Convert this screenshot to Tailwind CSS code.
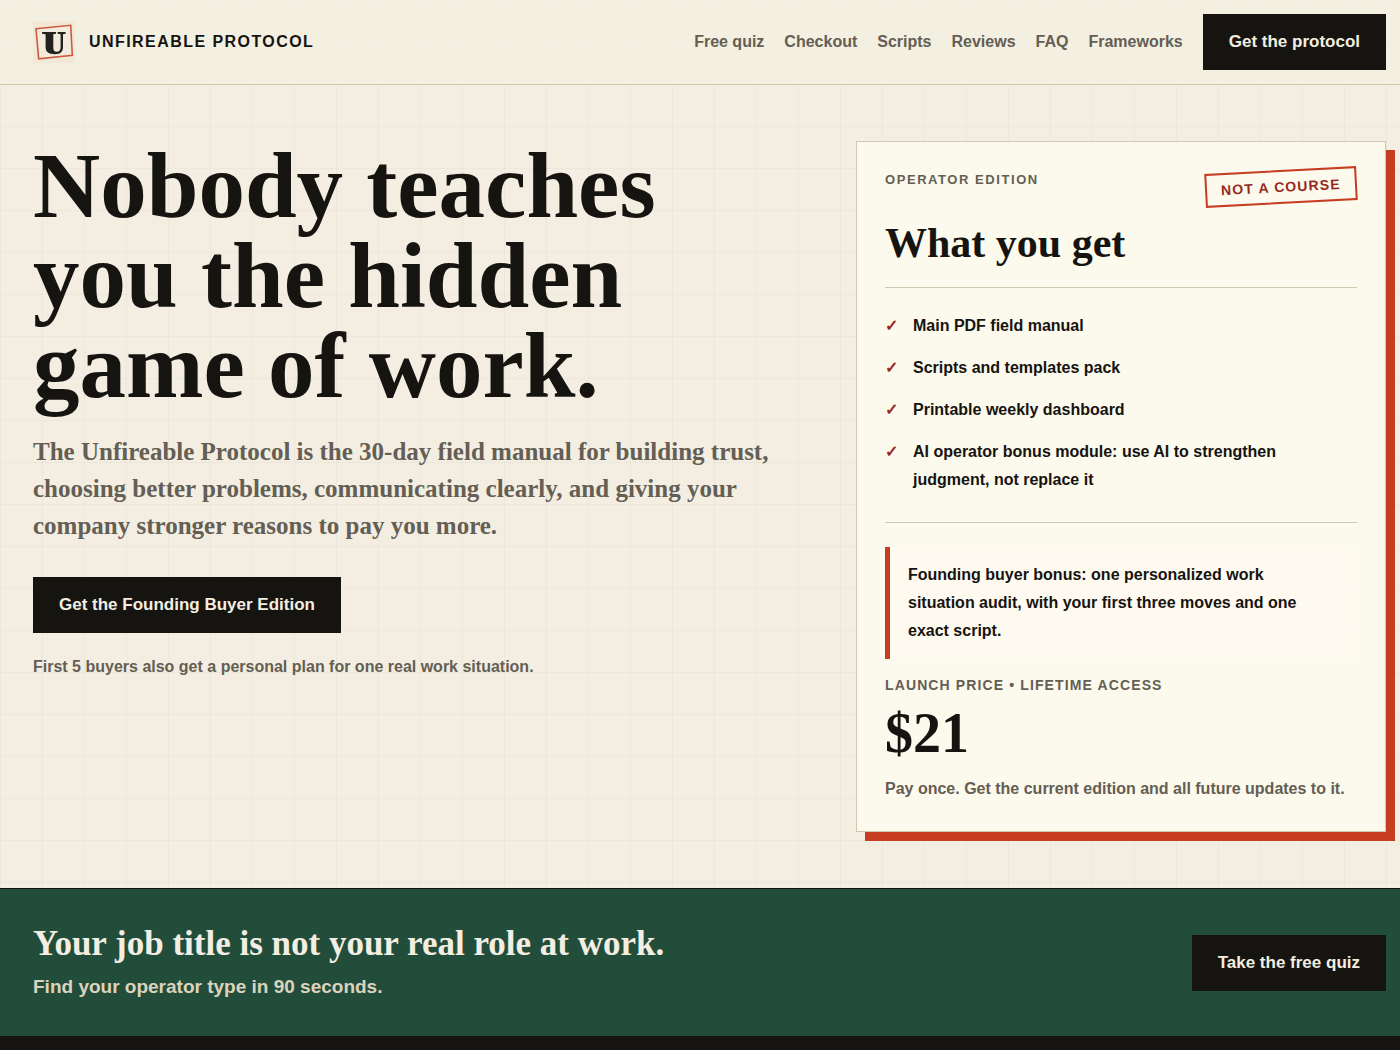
<!DOCTYPE html>
<html lang="en">

<head>
     <meta charset="UTF-8">
     <meta name="viewport" content="width=device-width, initial-scale=1.0">
     <meta name="description" content="The 30-day field manual for building trust at work">
     <title>Unfireable Protocol</title>
     <script src="https://cdn.jsdelivr.net/npm/@tailwindcss/browser@4"></script>
</head>

<body class="min-h-screen bg-[#161410] font-['Liberation_Sans',Arial,sans-serif] text-base leading-7 font-bold text-[#161410]">

     <!-- ruled paper background -->
     <div class="bg-[#f3eee1] bg-[linear-gradient(#16141008_1px,transparent_1px),linear-gradient(90deg,#16141008_1px,transparent_1px)] bg-[size:42px_42px]">

          <header class="border-b border-[#d1c4a8] bg-[#f3eee1]/90">
               <div class="flex items-center justify-between py-3.5 pr-3.5 pl-[33px]">
                    <a href="#" class="flex items-center gap-3.5 tracking-[0.09em] uppercase">
                         <svg class="size-[42px]" viewBox="0 0 42 42" aria-hidden="true">
                              <rect width="42" height="42" fill="#f2e8d5" />
                              <path d="M3 7.7 37.7 4.3 39.3 34.3 5.7 37.9Z" fill="#f3ecdc" stroke="#cc5a43" stroke-width="1.6" />
                              <path d="M9 11H23V12.8L20.3 13.3V26.5C20.3 29.6 21.4 30.8 23.6 30.8C26.4 30.8 27.6 29 27.6 25.8V13.3L24.6 12.8V11H32.6V12.8L30 13.3V25.8C30 30.9 27.6 33.2 22 33.2C15.8 33.2 12.6 30.8 12.6 26V13.3L9 12.8Z" fill="#23221c" />
                         </svg>
                         <span>Unfireable Protocol</span>
                    </a>
                    <nav class="flex items-center gap-5 text-[#645e54]">
                         <a href="#quiz">Free quiz</a>
                         <a href="#checkout">Checkout</a>
                         <a href="#scripts">Scripts</a>
                         <a href="#reviews">Reviews</a>
                         <a href="#faq">FAQ</a>
                         <a href="#frameworks">Frameworks</a>
                         <a href="#checkout" class="bg-[#161410] px-[26px] py-3.5 text-[17px] text-[#f3eee1]">Get the protocol</a>
                    </nav>
               </div>
          </header>

          <main class="grid grid-cols-[1fr_530px] items-start gap-14 pt-14 pr-3.5 pb-14 pl-[33px]">
               <section>
                    <h1 class="max-w-[700px] font-['Liberation_Serif',serif] text-[93px] leading-[90px]">Nobody teaches you the hidden game of work.</h1>
                    <p class="mt-[22px] font-['Liberation_Serif',serif] text-[25px] leading-[37px] text-[#645e54]">The Unfireable Protocol is the 30-day field manual for building trust, choosing better problems, communicating clearly, and giving your company stronger reasons to pay you more.</p>
                    <a href="#checkout" class="mt-[33px] inline-block bg-[#161410] px-[26px] py-3.5 text-[17px] text-[#f3eee1]">Get the Founding Buyer Edition</a>
                    <p class="mt-5 text-[#645e54]">First 5 buyers also get a personal plan for one real work situation.</p>
               </section>

               <!-- offer card -->
               <aside id="checkout" class="border border-[#d1c8b2] bg-[#fdfaee]/90 p-7 shadow-[9px_9px_0_#c63d22]">
                    <div class="flex items-start justify-between">
                         <p class="text-[13px] leading-5 tracking-[0.12em] text-[#645e54] uppercase">Operator edition</p>
                         <p class="-rotate-3 border-2 border-[#c63d22] px-3.5 py-[5px] text-sm leading-5 tracking-[0.08em] text-[#96291c] uppercase">Not a course</p>
                    </div>
                    <h2 class="mt-4 font-['Liberation_Serif',serif] text-[42px] leading-[46px]">What you get</h2>
                    <ul class="mt-[21px] flex flex-col gap-3.5 border-y border-[#d1c8b2] pt-6 pb-7">
                         <li class="flex gap-3.5 pr-7"><span class="w-3.5 shrink-0 text-[#96291c]">✓</span>Main PDF field manual</li>
                         <li class="flex gap-3.5 pr-7"><span class="w-3.5 shrink-0 text-[#96291c]">✓</span>Scripts and templates pack</li>
                         <li class="flex gap-3.5 pr-7"><span class="w-3.5 shrink-0 text-[#96291c]">✓</span>Printable weekly dashboard</li>
                         <li class="flex gap-3.5 pr-7"><span class="w-3.5 shrink-0 text-[#96291c]">✓</span>AI operator bonus module: use AI to strengthen judgment, not replace it</li>
                    </ul>
                    <p class="mt-6 border-l-5 border-[#c63d22] bg-[#fffaf0] py-3.5 pr-7 pl-[18px]">Founding buyer bonus: one personalized work situation audit, with your first three moves and one exact script.</p>
                    <p class="mt-3 text-sm leading-7 tracking-[0.08em] text-[#645e54] uppercase">Launch price • Lifetime access</p>
                    <p class="mt-1.5 font-['Liberation_Serif',serif] text-[56px] leading-[56px]">$21</p>
                    <p class="mt-3.5 text-[#645e54]">Pay once. Get the current edition and all future updates to it.</p>
               </aside>
          </main>
     </div>

     <!-- quiz banner -->
     <section id="quiz" class="flex items-center justify-between border-t border-[#161410] bg-[#224d3a] pt-[34px] pr-3.5 pb-[33px] pl-[33px]">
          <div>
               <h2 class="font-['Liberation_Serif',serif] text-[35px] leading-[42px] text-[#f3eee1]">Your job title is not your real role at work.</h2>
               <p class="mt-1.5 text-[19px] leading-8 text-[#dcd3bd]">Find your operator type in 90 seconds.</p>
          </div>
          <a href="#quiz" class="bg-[#161410] px-[26px] py-3.5 text-[17px] text-[#f3eee1]">Take the free quiz</a>
     </section>

</body>

</html>
